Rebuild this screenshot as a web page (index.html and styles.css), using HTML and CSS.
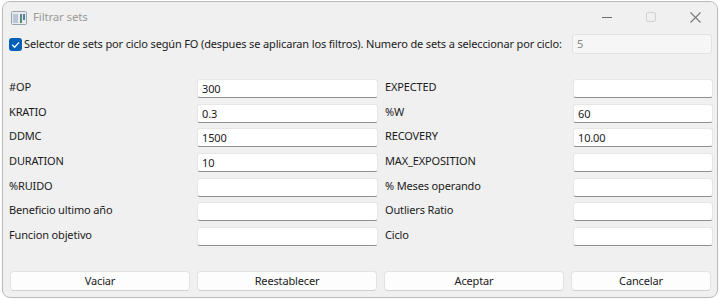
FILE: index.html
```html
<!DOCTYPE html>
<html lang="es">
<head>
<meta charset="utf-8">
<title>Filtrar sets</title>
<link rel="stylesheet" href="styles.css">
</head>
<body>
<div class="window">
  <div class="titlebar">
    <svg class="app-icon" width="16" height="14" viewBox="0 0 16 14">
      <rect x="0.5" y="0.5" width="15" height="13" rx="1" fill="#e9ecef" stroke="#9aa3ab"/>
      <rect x="2" y="3" width="5" height="9" fill="#b9c6d3"/>
      <rect x="9" y="3" width="2" height="9" fill="#5a8a7a"/>
      <rect x="12" y="3" width="2" height="6" fill="#4f7fa8"/>
    </svg>
    <span class="title">Filtrar sets</span>
    <div class="caption">
      <div class="cap-btn"><svg width="10" height="10" viewBox="0 0 10 10"><line x1="0" y1="5.5" x2="10" y2="5.5" stroke="#6e6e6e" stroke-width="1"/></svg></div>
      <div class="cap-btn"><svg width="10" height="10" viewBox="0 0 10 10"><rect x="0.5" y="0.5" width="9" height="9" rx="1.5" fill="none" stroke="#d2d2d2" stroke-width="1"/></svg></div>
      <div class="cap-btn"><svg width="11" height="11" viewBox="0 0 11 11"><path d="M0.5 0.5 L10.5 10.5 M10.5 0.5 L0.5 10.5" stroke="#7a7a7a" stroke-width="1.1" fill="none"/></svg></div>
    </div>
  </div>

  <div class="content">
    <div class="check-row">
      <span class="checkbox"><svg width="13" height="13" viewBox="0 0 13 13"><polyline points="3.2,6.8 5.6,9.2 10,4.4" fill="none" stroke="#fff" stroke-width="1.3"/></svg></span>
      <span class="check-label">Selector de sets por ciclo según FO (despues se aplicaran los filtros). Numero de sets a seleccionar por ciclo:</span>
      <div class="field disabled">5</div>
    </div>

    <div class="form-grid">
      <span class="lbl">#OP</span><div class="field">300</div>
      <span class="lbl">EXPECTED</span><div class="field"></div>

      <span class="lbl">KRATIO</span><div class="field">0.3</div>
      <span class="lbl">%W</span><div class="field">60</div>

      <span class="lbl">DDMC</span><div class="field">1500</div>
      <span class="lbl">RECOVERY</span><div class="field">10.00</div>

      <span class="lbl">DURATION</span><div class="field">10</div>
      <span class="lbl">MAX_EXPOSITION</span><div class="field"></div>

      <span class="lbl">%RUIDO</span><div class="field"></div>
      <span class="lbl">% Meses operando</span><div class="field"></div>

      <span class="lbl">Beneficio ultimo año</span><div class="field"></div>
      <span class="lbl">Outliers Ratio</span><div class="field"></div>

      <span class="lbl">Funcion objetivo</span><div class="field"></div>
      <span class="lbl">Ciclo</span><div class="field"></div>
    </div>

    <div class="buttons">
      <div class="btn">Vaciar</div>
      <div class="btn">Reestablecer</div>
      <div class="btn">Aceptar</div>
      <div class="btn">Cancelar</div>
    </div>
  </div>
</div>
</body>
</html>
```

FILE: styles.css
```css
* { box-sizing: border-box; }

html, body {
  margin: 0;
  padding: 0;
}

body {
  width: 720px;
  height: 299px;
  overflow: hidden;
  background: #ffffff;
  font-family: "Noto Sans", "Open Sans", sans-serif;
  font-size: 11px;
  letter-spacing: -0.15px;
  color: #1b1b1b;
}

.window {
  margin: 1px 0 0 2px;
  width: 716px;
  height: 297px;
  border: 1px solid #b9b9b9;
  border-radius: 8px;
  background: #f0f0f0;
  display: flex;
  flex-direction: column;
  overflow: hidden;
}

.titlebar {
  height: 30px;
  display: flex;
  align-items: center;
  background: #f0f0f0;
}

.app-icon {
  margin-left: 8px;
  margin-top: 1px;
  flex: none;
}

.title {
  margin-left: 6px;
  color: #9a9a9a;
  line-height: 16px;
  font-size: 11.5px;
}

.caption {
  margin-left: auto;
  display: flex;
  height: 30px;
}

.cap-btn {
  width: 44px;
  height: 30px;
  display: flex;
  align-items: center;
  justify-content: center;
}

.content {
  padding: 2px 5px 0 6px;
  display: flex;
  flex-direction: column;
}

.check-row {
  height: 20px;
  display: flex;
  align-items: center;
}

.checkbox {
  width: 13px;
  height: 13px;
  border-radius: 3px;
  background: #005fb8;
  display: flex;
  flex: none;
}

.check-label {
  margin-left: 2px;
  white-space: nowrap;
  line-height: 16px;
}

.field {
  height: 19px;
  background: #ffffff;
  border: 1px solid #e6e6e6;
  border-bottom-color: #8f8f8f;
  border-radius: 3px;
  padding: 0 4px;
  line-height: 17px;
  color: #1b1b1b;
  white-space: nowrap;
}

.check-row .field {
  margin-left: auto;
  width: 140px;
  height: 20px;
}

.field.disabled {
  background: #f6f6f6;
  border-color: #e2e2e2;
  color: #8a8a8a;
  line-height: 18px;
}

.form-grid {
  margin-top: 25px;
  display: grid;
  grid-template-columns: 181px 181px 181px 140px;
  grid-auto-rows: 19px;
  column-gap: 7px;
  row-gap: 5.67px;
}

.lbl {
  line-height: 16px;
  white-space: nowrap;
}

.buttons {
  margin-top: 25px;
  padding-left: 1px;
  display: grid;
  grid-template-columns: 180px 180px 180px 140px;
  column-gap: 7px;
}

.btn {
  height: 20px;
  background: #fdfdfd;
  border: 1px solid #e2e2e2;
  border-bottom-color: #cfcfcf;
  border-radius: 4px;
  text-align: center;
  line-height: 18px;
  color: #1b1b1b;
}
```
